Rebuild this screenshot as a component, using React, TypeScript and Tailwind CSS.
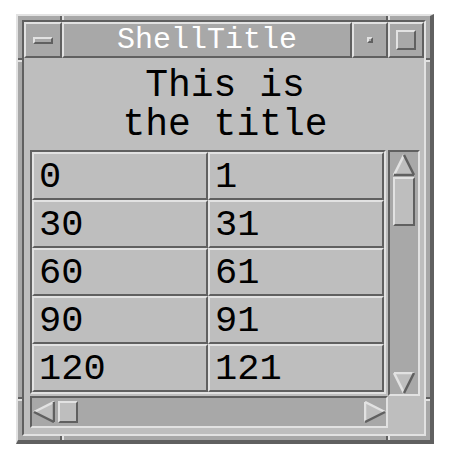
const raised =
  "border-2 border-t-[#e2e2e2] border-l-[#e2e2e2] border-r-[#606060] border-b-[#606060]";
const sunken =
  "border-2 border-t-[#606060] border-l-[#606060] border-r-[#e2e2e2] border-b-[#e2e2e2]";

const rows = [
  ["0", "1"],
  ["30", "31"],
  ["60", "61"],
  ["90", "91"],
  ["120", "121"],
];

type Dir = "up" | "down" | "left" | "right";

const Arrow = ({ dir }: { dir: Dir }) => {
  const L = "#e2e2e2";
  const D = "#606060";
  const shapes: Record<Dir, { pts: string; edges: [string, string][] }> = {
    up: {
      pts: "11,1 1,21 21,21",
      edges: [
        ["M11,1 L1,21", L],
        ["M11,1 L21,21", D],
        ["M1,21 L21,21", D],
      ],
    },
    down: {
      pts: "1,1 21,1 11,21",
      edges: [
        ["M1,1 L21,1", L],
        ["M1,1 L11,21", L],
        ["M21,1 L11,21", D],
      ],
    },
    left: {
      pts: "1,11 21,1 21,21",
      edges: [
        ["M1,11 L21,1", L],
        ["M21,1 L21,21", D],
        ["M1,11 L21,21", D],
      ],
    },
    right: {
      pts: "1,1 21,11 1,21",
      edges: [
        ["M1,1 L1,21", L],
        ["M1,1 L21,11", L],
        ["M1,21 L21,11", D],
      ],
    },
  };
  const s = shapes[dir];
  return (
    <svg width="22" height="22" viewBox="0 0 22 22" className="shrink-0">
      <polygon points={s.pts} fill="#bebebe" />
      {s.edges.map(([d, c], i) => (
        <path key={i} d={d} stroke={c} strokeWidth="2.5" fill="none" />
      ))}
    </svg>
  );
};

const Tick = ({ className }: { className: string }) => (
  <div className={`absolute ${className}`} />
);

export default function App() {
  return (
    <div className="w-[452px] h-[462px] bg-white pt-[14px] pl-[16px]">
      <div className="relative w-[418px] h-[430px] bg-[#a8a8a8] border-t-2 border-l-2 border-r-4 border-b-4 border-t-[#e2e2e2] border-l-[#e2e2e2] border-r-[#606060] border-b-[#606060] pt-[4px] pl-[4px] pr-[4px] pb-[4px]">
        {/* resize corner separators */}
        <Tick className="left-[42px] top-0 w-[2px] h-[4px] bg-[#606060]" />
        <Tick className="left-[44px] top-0 w-[2px] h-[4px] bg-[#e2e2e2]" />
        <Tick className="left-[368px] top-0 w-[2px] h-[4px] bg-[#606060]" />
        <Tick className="left-[370px] top-0 w-[2px] h-[4px] bg-[#e2e2e2]" />
        <Tick className="left-0 top-[42px] w-[4px] h-[2px] bg-[#606060]" />
        <Tick className="left-0 top-[44px] w-[4px] h-[2px] bg-[#e2e2e2]" />
        <Tick className="right-0 top-[42px] w-[4px] h-[2px] bg-[#606060]" />
        <Tick className="right-0 top-[44px] w-[4px] h-[2px] bg-[#e2e2e2]" />
        <Tick className="left-0 top-[381px] w-[4px] h-[2px] bg-[#606060]" />
        <Tick className="left-0 top-[383px] w-[4px] h-[2px] bg-[#e2e2e2]" />
        <Tick className="right-0 top-[381px] w-[4px] h-[2px] bg-[#606060]" />
        <Tick className="right-0 top-[383px] w-[4px] h-[2px] bg-[#e2e2e2]" />
        <Tick className="left-[42px] bottom-0 w-[2px] h-[4px] bg-[#606060]" />
        <Tick className="left-[44px] bottom-0 w-[2px] h-[4px] bg-[#e2e2e2]" />
        <Tick className="left-[368px] bottom-0 w-[2px] h-[4px] bg-[#606060]" />
        <Tick className="left-[370px] bottom-0 w-[2px] h-[4px] bg-[#e2e2e2]" />

        <div className={`${sunken} h-full flex flex-col`}>
          {/* title bar */}
          <div className="flex h-[36px] shrink-0 bg-[#a8a8a8]">
            <div className={`${raised} w-[38px] flex items-center justify-center`}>
              <div className={`${raised} w-[20px] h-[7px] border-[2px]`} />
            </div>
            <div
              className={`${raised} flex-1 flex items-center justify-center text-white text-[30px] leading-[32px]`}
              style={{ fontFamily: '"Liberation Mono", monospace' }}
            >
              ShellTitle
            </div>
            <div className={`${raised} w-[36px] flex items-center justify-center`}>
              <div className={`${raised} w-[6px] h-[6px] border-[2px]`} />
            </div>
            <div className={`${raised} w-[36px] flex items-center justify-center`}>
              <div className={`${raised} w-[20px] h-[20px]`} />
            </div>
          </div>

          {/* client area */}
          <div
            className="flex-1 bg-[#bebebe] pl-[6px] pr-[4px] flex flex-col"
            style={{ fontFamily: '"Liberation Mono", monospace' }}
          >
            <div className="h-[92px] pt-[8px] text-center text-black text-[38px] leading-[39px]">
              <div>This is</div>
              <div>the title</div>
            </div>

            <div className="grid grid-cols-[358px_32px] grid-rows-[246px_32px]">
              {/* table */}
              <div className={`${sunken} w-[356px] h-[244px]`}>
                {rows.map((r) => (
                  <div key={r[0]} className="flex">
                    {r.map((c) => (
                      <div
                        key={c}
                        className={`${raised} w-[176px] h-[48px] pl-[5px] pt-[2px] text-[37px] leading-[42px] text-black`}
                      >
                        {c}
                      </div>
                    ))}
                  </div>
                ))}
              </div>

              {/* vertical scrollbar */}
              <div className={`${sunken} bg-[#a8a8a8] flex flex-col items-center pt-[2px]`}>
                <Arrow dir="up" />
                <div className={`${raised} w-[22px] h-[49px] mt-[1px] bg-[#bebebe]`} />
                <div className="flex-1" />
                <Arrow dir="down" />
              </div>

              {/* horizontal scrollbar */}
              <div className={`${sunken} bg-[#a8a8a8] flex items-center pl-[1px]`}>
                <Arrow dir="left" />
                <div className={`${raised} w-[20px] h-[22px] ml-[3px] bg-[#bebebe]`} />
                <div className="flex-1" />
                <Arrow dir="right" />
              </div>

              <div />
            </div>
          </div>
        </div>
      </div>
    </div>
  );
}
